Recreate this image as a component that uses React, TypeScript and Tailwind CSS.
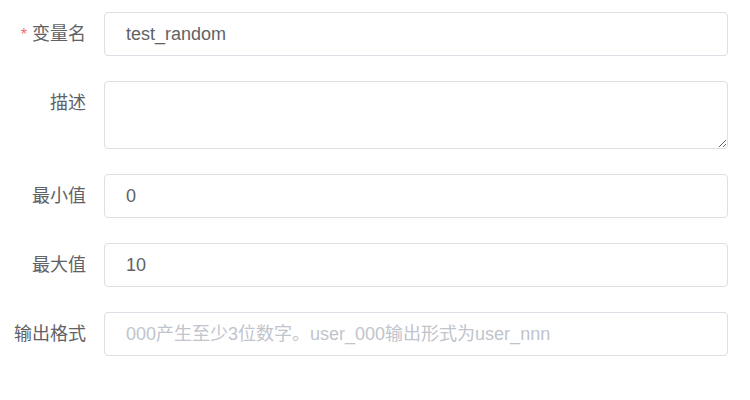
import React from "react";

const font = { fontFamily: '"Liberation Sans", "Noto Sans CJK SC", sans-serif' };

function Label({ text, required }: { text: string; required?: boolean }) {
  return (
    <div className="h-[44px] w-[104px] shrink-0 overflow-hidden pr-[18px] text-right text-[18px] leading-[44px] text-[#606266]">
      {required && <span className="mr-[5px] text-[16px] text-[#f56c6c]">*</span>}
      {text}
    </div>
  );
}

function Input({ value, placeholder }: { value?: string; placeholder?: string }) {
  return (
    <input
      readOnly
      value={value ?? ""}
      placeholder={placeholder}
      className="h-[44px] flex-1 rounded-[4px] border border-[#dcdfe6] bg-white px-[21px] text-[18px] text-[#606266] outline-none placeholder:text-[#c0c4cc]"
      style={font}
    />
  );
}

export default function App() {
  return (
    <div className="h-[400px] w-[750px] bg-white pt-[12px] pr-[22px]" style={font}>
      <div className="flex flex-col gap-[25px]">
        <div className="flex h-[44px]">
          <Label text="变量名" required />
          <Input value="test_random" />
        </div>
        <div className="flex h-[68px]">
          <Label text="描述" />
          <textarea
            readOnly
            className="h-[68px] flex-1 resize-y rounded-[4px] border border-[#dcdfe6] bg-white px-[21px] py-[6px] text-[18px] text-[#606266] outline-none"
            style={font}
          />
        </div>
        <div className="flex h-[44px]">
          <Label text="最小值" />
          <Input value="0" />
        </div>
        <div className="flex h-[44px]">
          <Label text="最大值" />
          <Input value="10" />
        </div>
        <div className="flex h-[44px]">
          <Label text="输出格式" />
          <Input placeholder="000产生至少3位数字。user_000输出形式为user_nnn" />
        </div>
      </div>
    </div>
  );
}
